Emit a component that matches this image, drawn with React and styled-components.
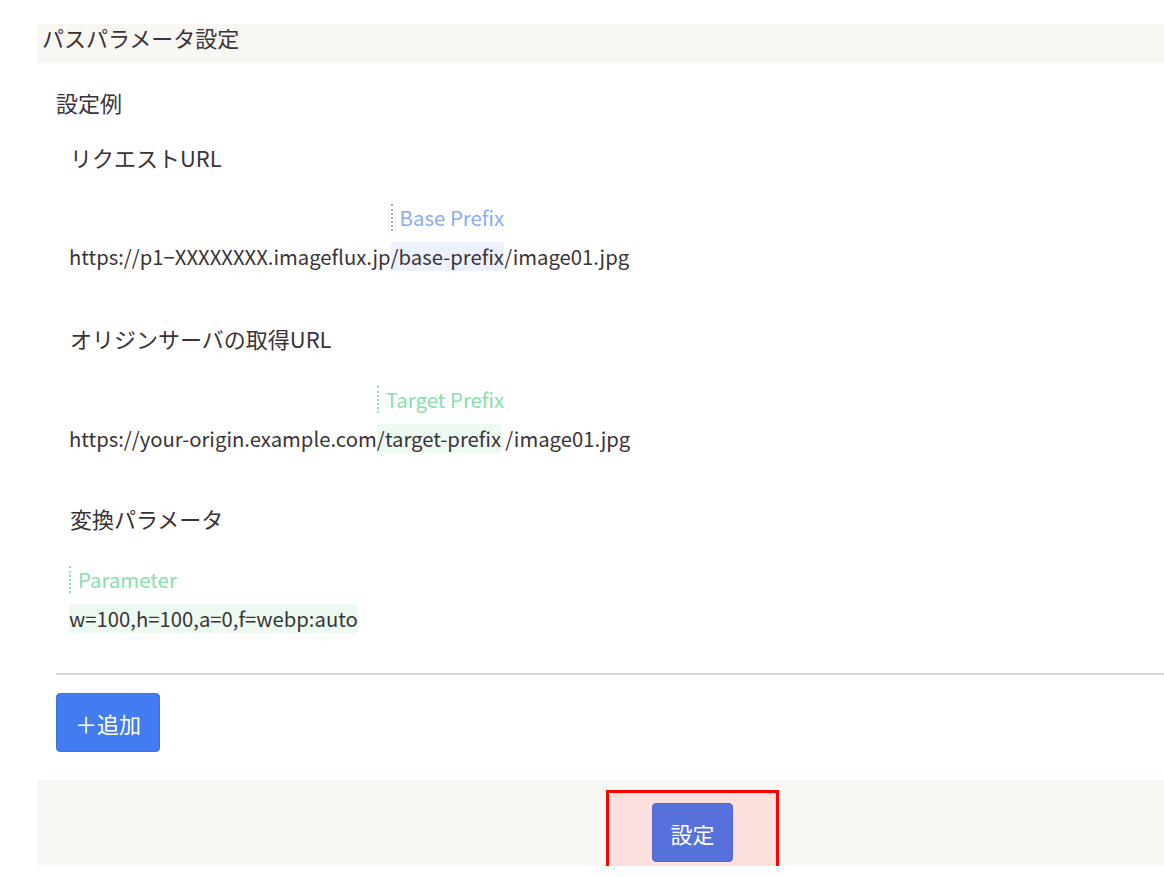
import React from 'react';
import styled, { createGlobalStyle } from 'styled-components';

const GlobalStyle = createGlobalStyle`
  html, body {
    margin: 0;
    padding: 0;
    background: #fff;
    overflow: hidden;
  }
  body {
    font-family: "Noto Sans CJK JP", "Noto Sans", sans-serif;
    color: #3b3336;
  }
`;

const tones = {
  blue: { label: '#8aacf6', bg: '#edf1fd' },
  green: { label: '#88e0ad', bg: '#edfaf2' },
};

const Page = styled.div`
  width: 1311px;
  margin: 24px 0 0 37px;
`;

const HeaderBand = styled.div`
  height: 39px;
  background: #f8f7f3;
  padding-left: 5px;
  font-size: 22px;
  line-height: 27px;
`;

const Body = styled.div`
  padding: 25px 0 0 19px;
`;

const BlockTitle = styled.div`
  font-size: 22px;
  line-height: 28px;
`;

const Section = styled.div`
  padding-left: 14px;
  margin-top: ${(p) => p.$top}px;
`;

const SectionTitle = styled.div`
  font-size: 22px;
  line-height: 28px;
  margin-bottom: ${(p) => p.$gap}px;
`;

const Line = styled.div`
  display: flex;
  align-items: flex-end;
  margin-left: -1px;
  font-size: 20.3px;
  line-height: 29px;
  white-space: pre;
`;

const Annotated = styled.span`
  display: inline-flex;
  flex-direction: column;
  align-items: flex-start;
`;

const Label = styled.span`
  height: 27px;
  margin-bottom: 11px;
  padding-left: 7px;
  border-left: 2px dotted ${(p) => tones[p.$tone].label};
  color: ${(p) => tones[p.$tone].label};
  font-size: 20.4px;
  line-height: 27px;
`;

const Mark = styled.span`
  background: ${(p) => tones[p.$tone].bg};
  border-radius: 2px;
`;

const Rest = styled.span`
  margin-left: ${(p) => p.$gap || 0}px;
`;

const Divider = styled.hr`
  margin: 40px 0 0;
  border: 0;
  border-top: 2px solid #d6d6d6;
`;

const AddButton = styled.button`
  display: block;
  margin-top: 18px;
  width: 104px;
  height: 59px;
  border: 1px solid #3a70e6;
  border-radius: 4px;
  background: #437cf0;
  color: #fff;
  font-family: inherit;
  font-size: 22px;
  padding: 0;
`;

const Footer = styled.div`
  margin-top: 28px;
  height: 76px;
  padding-top: 10px;
  background: #f8f7f3;
  display: flex;
  justify-content: center;
  align-items: flex-start;
`;

const Highlight = styled.div`
  padding: 10px 43px 11px;
  border: 3px solid #ff0000;
  background: #fce0de;
`;

const SubmitButton = styled.button`
  display: block;
  width: 81px;
  height: 59px;
  border: 1px solid #4d66d4;
  border-radius: 4px;
  background: #5670dc;
  color: #fff;
  font-family: inherit;
  font-size: 22px;
  padding: 0;
`;

export default function App() {
  return (
    <>
      <GlobalStyle />
      <Page>
        <HeaderBand>パスパラメータ設定</HeaderBand>
        <Body>
          <BlockTitle>設定例</BlockTitle>

          <Section $top={27}>
            <SectionTitle $gap={33}>リクエストURL</SectionTitle>
            <Line>
              <span>https://p1−XXXXXXXX.imageflux.jp</span>
              <Annotated>
                <Label $tone="blue">Base Prefix</Label>
                <Mark $tone="blue">/base-prefix</Mark>
              </Annotated>
              <span>/image01.jpg</span>
            </Line>
          </Section>

          <Section $top={53}>
            <SectionTitle $gap={34}>オリジンサーバの取得URL</SectionTitle>
            <Line>
              <span>https://your-origin.example.com</span>
              <Annotated>
                <Label $tone="green">Target Prefix</Label>
                <Mark $tone="green">/target-prefix</Mark>
              </Annotated>
              <Rest $gap={1}>/image01.jpg</Rest>
            </Line>
          </Section>

          <Section $top={51}>
            <SectionTitle $gap={34}>変換パラメータ</SectionTitle>
            <Line>
              <Annotated>
                <Label $tone="green">Parameter</Label>
                <Mark $tone="green">w=100,h=100,a=0,f=webp:auto</Mark>
              </Annotated>
            </Line>
          </Section>

          <Divider />
          <AddButton>＋追加</AddButton>
        </Body>
        <Footer>
          <Highlight>
            <SubmitButton>設定</SubmitButton>
          </Highlight>
        </Footer>
      </Page>
    </>
  );
}
